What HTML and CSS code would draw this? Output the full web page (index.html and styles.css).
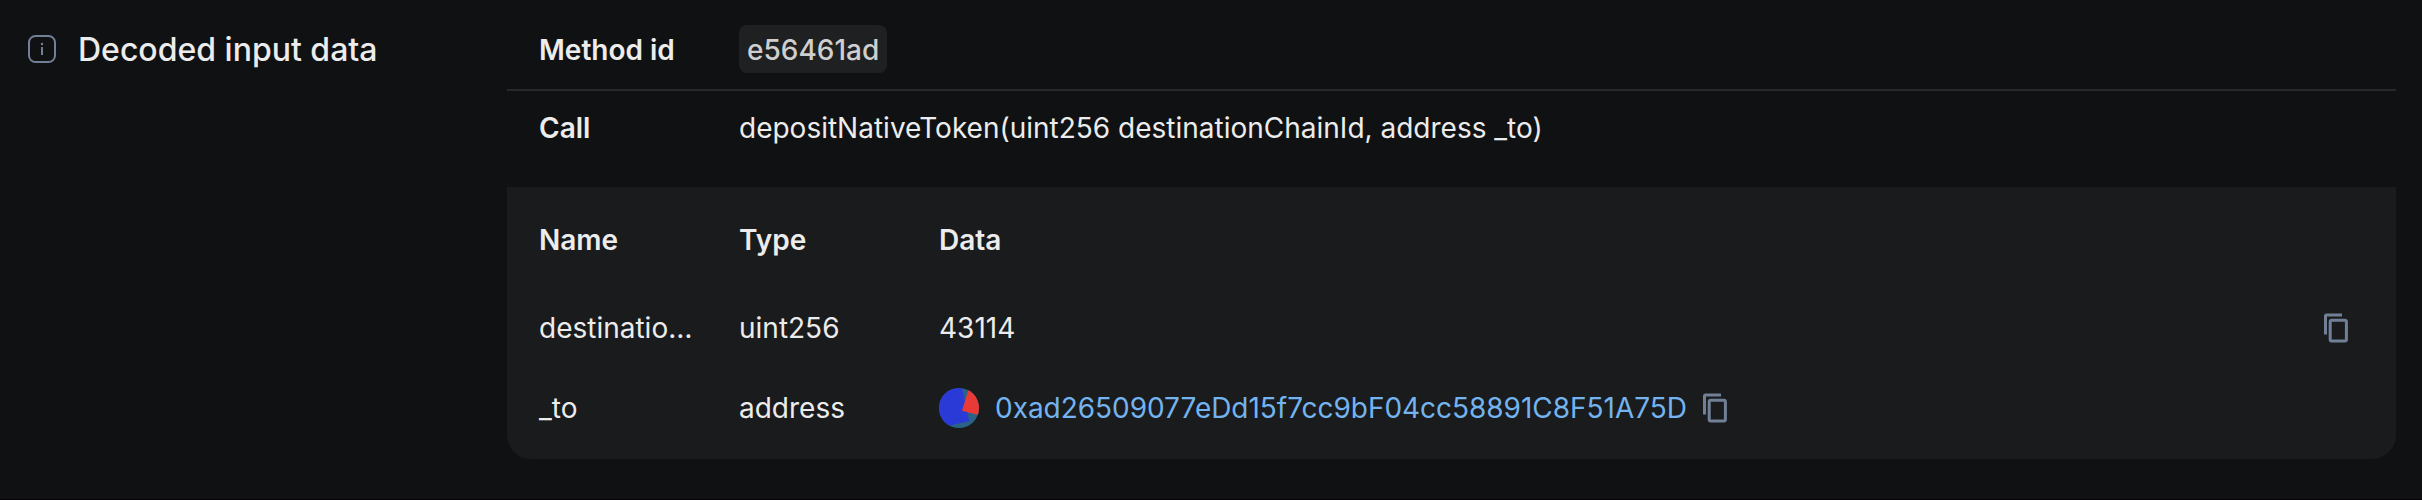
FILE: index.html
```
<!DOCTYPE html>
<html lang="en">
<head>
<meta charset="utf-8">
<title>Decoded input data</title>
<link rel="stylesheet" href="styles.css">
</head>
<body>
<main class="details">
  <div class="label">
    <svg class="info" viewBox="0 0 28 28" fill="none">
      <rect x="1" y="1" width="26" height="26" rx="6.5" stroke="currentColor" stroke-width="2"/>
      <path d="M14 12v8" stroke="currentColor" stroke-width="2"/>
      <circle cx="14" cy="9" r="1.2" fill="currentColor"/>
    </svg>
    <span class="title">Decoded input data</span>
  </div>
  <section class="decoded">
    <div class="row method">
      <span class="strong">Method id</span>
      <span class="tag">e56461ad</span>
    </div>
    <div class="row call">
      <span class="strong">Call</span>
      <span>depositNativeToken(uint256 destinationChainId, address _to)</span>
    </div>
    <div class="params">
      <div class="param">
        <span class="strong">Name</span>
        <span class="strong">Type</span>
        <span class="strong">Data</span>
      </div>
      <div class="param first">
        <span>destinatio…</span>
        <span>uint256</span>
        <div class="value spread">
          <span>43114</span>
          <svg class="copy" viewBox="0 0 24 30" fill="none" stroke="currentColor" stroke-width="3">
            <path d="M1.5 21.5V3Q1.5 2 2.5 2H18"/>
            <rect x="6.2" y="7.3" width="16.2" height="20.7" rx="1.5"/>
          </svg>
        </div>
      </div>
      <div class="param next">
        <span>_to</span>
        <span>address</span>
        <div class="value">
          <svg class="avatar" viewBox="0 0 40 40">
            <clipPath id="disc"><circle cx="20" cy="20" r="20"/></clipPath>
            <g clip-path="url(#disc)">
              <path fill="#2a6386" d="M0 0h40v40H0z"/>
              <path fill="#2a3ad6" d="M23 0l7.3 33L-1 40.3V0z"/>
              <path fill="#ea3a38" d="M23 22.7L30 0h12v27.8z"/>
            </g>
          </svg>
          <span class="address">0xad26509077eDd15f7cc9bF04cc58891C8F51A75D</span>
          <svg class="copy" viewBox="0 0 24 30" fill="none" stroke="currentColor" stroke-width="3">
            <path d="M1.5 21.5V3Q1.5 2 2.5 2H18"/>
            <rect x="6.2" y="7.3" width="16.2" height="20.7" rx="1.5"/>
          </svg>
        </div>
      </div>
    </div>
  </section>
</main>
</body>
</html>
```
FILE: styles.css
```
* { box-sizing: border-box; }

body {
  margin: 0;
  height: 500px;
  border-bottom: 1px solid #060108;
  background: #101112;
  color: #ececec;
  font: 400 28px/40px Inter, sans-serif;
}

.details {
  display: grid;
  grid-template-columns: 479px 1889px;
  padding-left: 28px;
}

.label {
  display: flex;
  align-items: center;
  gap: 22px;
  height: 98px;
  font-size: 32px;
  font-weight: 500;
}

.title { padding-top: 2px; }

.info { width: 28px; height: 28px; color: #718096; }

.row {
  display: grid;
  grid-template-columns: 200px 1fr;
  align-items: center;
  padding: 0 32px;
}

.method {
  height: 91px;
  padding-top: 9px;
  border-bottom: 2px solid #29292a;
}

.method .strong { padding-top: 2px; }

.call { height: 96px; padding-bottom: 22px; }

.strong { font-weight: 600; }

.tag {
  justify-self: start;
  height: 48px;
  padding: 0 8px;
  line-height: 50px;
  border-radius: 8px;
  background: #1f2021;
  color: #cfcfcf;
  font-weight: 500;
}

.params {
  height: 272px;
  padding: 33px 48px 0 32px;
  border-radius: 0 0 24px 24px;
  background: #1a1b1c;
}

.param {
  display: grid;
  grid-template-columns: 160px 160px 1fr;
  column-gap: 40px;
  align-items: center;
  height: 40px;
}

.first { margin-top: 48px; }
.next { margin-top: 40px; }

.value { display: flex; align-items: center; }
.spread { justify-content: space-between; }

.avatar { width: 40px; height: 40px; margin-right: 16px; }
.address { margin-right: 16px; color: #73b3ef; letter-spacing: -0.03px; }
.copy { width: 24px; height: 30px; color: #718096; }
```
